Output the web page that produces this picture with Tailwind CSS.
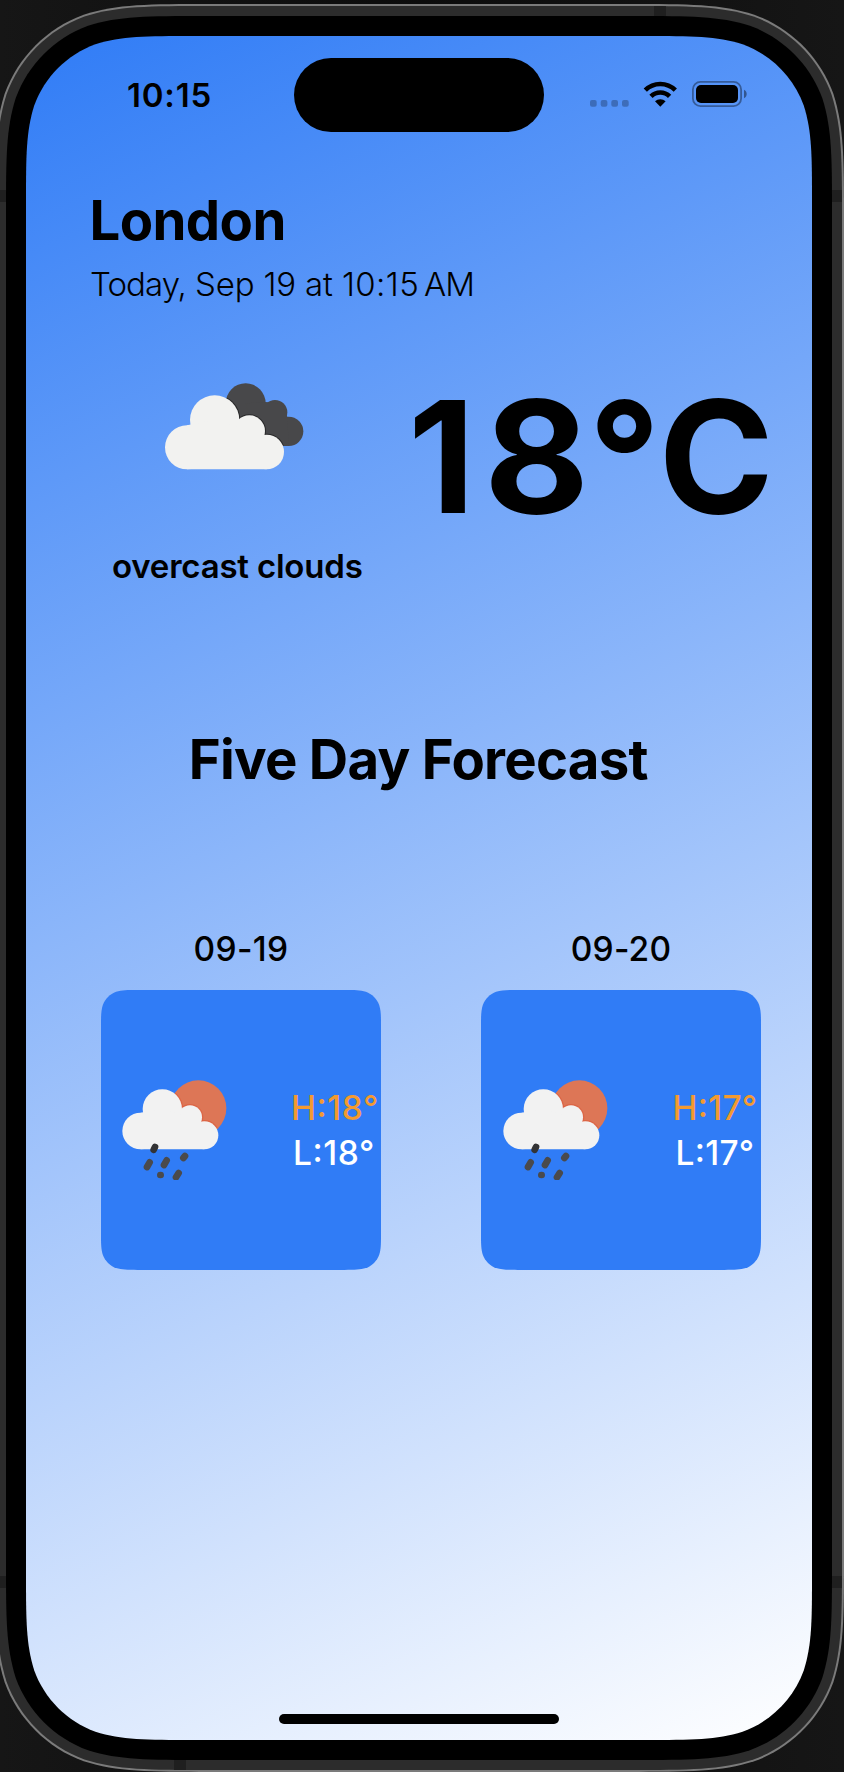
<!DOCTYPE html>
<html lang="en">
<head>
<meta charset="utf-8">
<title>Weather</title>
<script src="https://cdn.jsdelivr.net/npm/@tailwindcss/browser@4"></script>
</head>
<body class="w-[844px] h-[1772px] overflow-hidden bg-linear-to-r from-[#161616] via-[#0c0c0c] to-[#161616] font-['Inter','Liberation_Sans',sans-serif] text-black">
<svg class="absolute w-0 h-0">
  <clipPath id="sun-clip"><circle cx="265" cy="144" r="83"/></clipPath>
  <symbol id="rain" viewBox="36 59 315 300">
    <circle cx="265" cy="144" r="84" fill="#dd7656"/>
    <g fill="none" stroke="#dc5a3a" stroke-width="8" stroke-opacity=".6" clip-path="url(#sun-clip)">
      <circle cx="157" cy="146" r="59"/><circle cx="240" cy="171" r="36"/><circle cx="283" cy="225" r="42"/>
    </g>
    <g fill="#f2f2f2">
      <circle cx="92" cy="212" r="55"/><circle cx="157" cy="146" r="59"/><circle cx="240" cy="171" r="36"/><circle cx="283" cy="225" r="42"/>
      <path d="M92 157L157 146L240 171L283 190V267H92Z"/>
    </g>
    <g stroke="#4a4a4c" stroke-width="20" stroke-linecap="round">
      <path d="M131 268L135 260" stroke="#333334"/>
      <path d="M111 320L119 306M162 314L170 300M220 293L225 287M151 344L152 344M198 351L206 338"/>
    </g>
  </symbol>
</svg>

<!-- device shell: highlight edge, steel band, bezel, screen -->
<div data-corner="142" class="w-[850px] h-[1768px] -ml-[6px] mt-[4px] p-[2px] bg-[#7b7b7b]">
  <div data-corner="140" class="relative w-[846px] h-[1764px] p-[10px] bg-[#2c2c2c]">
    <i class="absolute left-[658px] top-0 w-3 h-[10px] bg-[#1f1f1f]"></i>
    <i class="absolute left-[178px] bottom-0 w-3 h-[10px] bg-[#1f1f1f]"></i>
    <i class="absolute left-0 top-[184px] w-[10px] h-3 bg-[#1f1f1f]"></i>
    <i class="absolute right-0 top-[184px] w-[10px] h-3 bg-[#1f1f1f]"></i>
    <i class="absolute left-0 top-[1570px] w-[10px] h-3 bg-[#1f1f1f]"></i>
    <i class="absolute right-0 top-[1570px] w-[10px] h-3 bg-[#1f1f1f]"></i>
    <div data-corner="130" class="w-[826px] h-[1744px] p-[20px] bg-black">
      <div data-corner="110" class="w-[786px] h-[1704px] flex flex-col bg-[linear-gradient(155.23deg,#307cf6,#ffffff)]">

        <header class="mt-[22px] h-[74px] flex items-center pl-[101px] shrink-0">
          <div class="w-[167px] mb-px text-[33px] leading-[40px] font-semibold tracking-[0.8px] whitespace-nowrap">10:15</div>
          <div class="w-[250px] h-[74px] rounded-full bg-black"></div>
          <div class="flex ml-[46px] mb-[2px]">
            <svg width="40" height="26" viewBox="0 0 40 26" fill="#000" fill-opacity=".25">
              <rect x="0" y="19" width="6.7" height="6.7" rx="2"/><rect x="10.7" y="19" width="6.7" height="6.7" rx="2"/><rect x="21.3" y="19" width="6.7" height="6.7" rx="2"/><rect x="32" y="19" width="6.7" height="6.7" rx="2"/>
            </svg>
            <svg class="ml-[13px]" width="35" height="26" viewBox="0 0 35 26">
              <path d="M2.3 9.2A21.2 21.2 0 0 1 32.3 9.2M8 15.4A13 13 0 0 1 26.6 15.4" fill="none" stroke="#000" stroke-width="4.6"/>
              <path d="M17.3 25.8L12 20.3A7.6 7.6 0 0 1 22.6 20.3Z"/>
            </svg>
            <svg class="ml-[14px]" width="56" height="26" viewBox="0 0 56 26">
              <rect x=".9" y=".9" width="48.2" height="24.2" rx="7.6" fill="none" stroke="#000" stroke-opacity=".38" stroke-width="1.8"/>
              <rect x="4" y="4" width="42" height="18" rx="5"/>
              <path d="M52 8.8C55.6 10.2 55.6 15.8 52 17.2Z" fill-opacity=".42"/>
            </svg>
          </div>
        </header>

        <section class="mt-[53.7px] pl-[65px] shrink-0 whitespace-nowrap">
          <h1 class="-ml-[1.5px] text-[54.5px] leading-[68px] font-bold tracking-[-0.6px]">London</h1>
          <p class="mt-[10px] -ml-[1px] text-[33px] leading-[40px] font-light tracking-[-0.17px]"><span class="tracking-[-0.95px]">Today,</span> Sep 19 at <span class="tracking-[0.4px]">10:15</span>&#8201;<span class="-ml-[1px] tracking-[-0.8px]">AM</span></p>
        </section>

        <section class="mt-[72px] pl-[86px] flex items-start shrink-0 whitespace-nowrap">
          <div class="w-[296px]">
            <svg class="mt-[7px] ml-[53px]" width="139" height="87" viewBox="225 68 417 261">
              <clipPath id="dark-clip"><circle cx="467" cy="129" r="59"/><circle cx="596" cy="213" r="43"/><path d="M467 129L527 125L575 150L596 200V256H520Z"/></clipPath>
              <g fill="#48484a">
                <circle cx="467" cy="129" r="60"/><circle cx="555" cy="156" r="37"/><circle cx="596" cy="213" r="44"/>
                <path d="M467 129L527 125L575 130L592 169L596 257L500 257Z"/>
              </g>
              <g fill="none" stroke="#1c1c1d" stroke-opacity=".7" stroke-width="8" clip-path="url(#dark-clip)">
                <circle cx="374" cy="179" r="73"/><circle cx="478" cy="212" r="46"/><circle cx="530" cy="275" r="51"/>
              </g>
              <g fill="#f2f2f0">
                <circle cx="291" cy="261" r="66"/><circle cx="374" cy="179" r="74"/><circle cx="478" cy="212" r="47"/><circle cx="530" cy="275" r="52"/>
                <path d="M291 195L374 179L478 212L530 240V327H291Z"/>
              </g>
            </svg>
            <p class="mt-[76px] text-[33px] leading-[40px] font-semibold tracking-[-0.2px]">overcast clouds</p>
          </div>
          <div class="mt-px text-[155.5px] leading-[160px] font-bold"><span class="tracking-[10.8px]">1</span><span class="inline-block scale-x-[1.04] tracking-[1.6px]">8</span><span class="tracking-[-1.5px]">°</span>C</div>
        </section>

        <h2 class="mt-[139.4px] pl-[162.7px] text-[54.5px] leading-[68px] font-bold tracking-[-0.73px] whitespace-nowrap shrink-0">Five Day Forecast</h2>

        <section class="mt-[136px] pl-[75px] flex gap-[100px] shrink-0 whitespace-nowrap">
          <div class="w-[280px]">
            <p class="text-center text-[33.5px] leading-[40px] font-[540] tracking-[0.4px]">09-19</p>
            <div data-corner="24" class="mt-[20.8px] h-[280px] pl-[21px] flex items-center bg-[#307cf6]">
              <svg width="105" height="100"><use href="#rain"/></svg>
              <div class="mt-[2px] ml-[64px] w-[86px] text-center text-[33.5px] leading-[45px] font-[540] tracking-[0.6px] [font-feature-settings:'case'_1]">
                <p class="text-[#f39a30]">H:18°</p>
                <p class="text-white">L:18°</p>
              </div>
            </div>
          </div>
          <div class="w-[280px]">
            <p class="text-center text-[33.5px] leading-[40px] font-[540] tracking-[0.2px]">09-20</p>
            <div data-corner="24" class="mt-[20.8px] h-[280px] pl-[22px] flex items-center bg-[#307cf6]">
              <svg width="105" height="100"><use href="#rain"/></svg>
              <div class="mt-[2px] ml-[64px] w-[86px] text-center text-[33.5px] leading-[45px] font-[540] tracking-[0.3px] [font-feature-settings:'case'_1]">
                <p class="text-[#f39a30]">H:17°</p>
                <p class="text-white">L:17°</p>
              </div>
            </div>
          </div>
        </section>

        <div class="mt-auto mb-[16px] ml-[253px] w-[280px] h-[10px] rounded-full bg-black shrink-0"></div>
      </div>
    </div>
  </div>
</div>

<script>
// Continuous-curvature corners: three Bezier segments per corner, scaled by the radius.
function roundCorners(el) {
  const r = +el.dataset.corner, w = el.offsetWidth, h = el.offsetHeight;
  const a = 1.52866 * r, b = 1.08849 * r, c = 0.86841 * r, d = 0.63149 * r,
        e = 0.07491 * r, f = 0.37282 * r, g = 0.16906 * r;
  const steps = [[a, 0], [b, 0], [c, 0], [d, e], [f, g], [g, f], [e, d], [0, c], [0, b], [0, a]];
  const rev = steps.slice().reverse();
  const corner = (pts, fx, fy) => {
    const p = pts.map(([x, y]) => fx(x) + ' ' + fy(y));
    return p[0] + 'C' + p.slice(1).join(' ');
  };
  const l = v => v, R = v => w - v, B = v => h - v;
  el.style.clipPath = `path("M${corner(steps, R, l)}L${corner(rev, R, B)}L${corner(steps, l, B)}L${corner(rev, l, l)}Z")`;
}
const watcher = new ResizeObserver(entries => entries.forEach(x => roundCorners(x.target)));
document.querySelectorAll('[data-corner]').forEach(el => watcher.observe(el));
</script>
</body>
</html>
